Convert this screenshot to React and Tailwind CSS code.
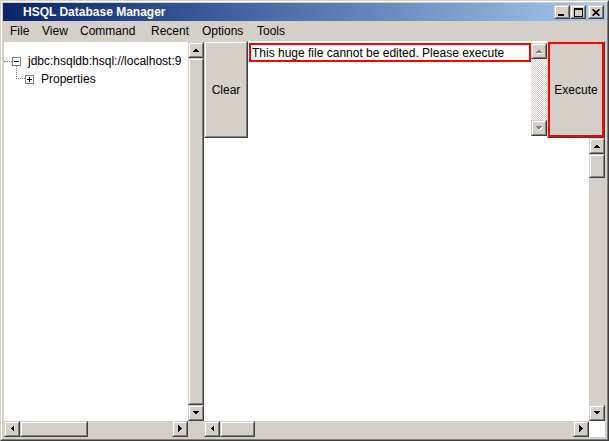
import React from 'react';

const outer = 'border border-t-[#d4d0c8] border-l-[#d4d0c8] border-r-[#404040] border-b-[#404040]';
const inner = 'border border-t-white border-l-white border-r-[#808080] border-b-[#808080]';

function Raised({ className = '', children, innerClassName = '' }) {
  return (
    <div className={`${outer} bg-[#d4d0c8] shrink-0 ${className}`}>
      <div className={`${inner} h-full w-full ${innerClassName}`}>{children}</div>
    </div>
  );
}

const arrowPoints = {
  up: '0,4 3.5,0.5 7,4',
  down: '0,0 3.5,3.5 7,0',
  left: '4,0 0.5,3.5 4,7',
  right: '0,0 3.5,3.5 0,7',
};

function Arrow({ dir, disabled }) {
  const vertical = dir === 'up' || dir === 'down';
  const w = vertical ? 7 : 4;
  const h = vertical ? 4 : 7;
  return (
    <svg width={w + 1} height={h + 1} viewBox={`0 0 ${w + 1} ${h + 1}`} shapeRendering="crispEdges">
      {disabled && <polygon points={arrowPoints[dir]} fill="#ffffff" transform="translate(1,1)" />}
      <polygon points={arrowPoints[dir]} fill={disabled ? '#808080' : '#000000'} />
    </svg>
  );
}

function ScrollButton({ dir, disabled }) {
  return (
    <Raised className="w-[16px] h-[16px]" innerClassName="flex items-center justify-center">
      <Arrow dir={dir} disabled={disabled} />
    </Raised>
  );
}

function HScroll({ thumb }) {
  return (
    <div className="flex-1 h-[16px] flex bg-[#d4d0c8]">
      <ScrollButton dir="left" />
      <Raised className="h-[16px]">
        <div style={{ width: thumb - 4 }} />
      </Raised>
      <div className="flex-1" />
      <ScrollButton dir="right" />
    </div>
  );
}

function TreeBox({ open }) {
  return (
    <svg width="9" height="9" viewBox="0 0 9 9" shapeRendering="crispEdges" className="shrink-0">
      <rect x="0.5" y="0.5" width="8" height="8" fill="#ffffff" stroke="#808080" />
      <line x1="2" y1="4.5" x2="7" y2="4.5" stroke="#000000" />
      {!open && <line x1="4.5" y1="2" x2="4.5" y2="7" stroke="#000000" />}
    </svg>
  );
}

function TitleButton({ kind, className = '' }) {
  return (
    <Raised className={`w-[16px] h-[14px] ${className}`} innerClassName="flex items-center justify-center">
      {kind === 'min' && (
        <svg width="8" height="7" viewBox="0 0 8 7" shapeRendering="crispEdges" className="mt-[1px]">
          <rect x="0" y="5" width="6" height="2" fill="#000" />
        </svg>
      )}
      {kind === 'max' && (
        <svg width="9" height="9" viewBox="0 0 9 9" shapeRendering="crispEdges">
          <rect x="0.5" y="0.5" width="8" height="8" fill="none" stroke="#000" />
          <rect x="0" y="0" width="9" height="2" fill="#000" />
        </svg>
      )}
      {kind === 'close' && (
        <svg width="8" height="7" viewBox="0 0 8 7">
          <path d="M0.6 0.3 L7.4 6.7 M7.4 0.3 L0.6 6.7" stroke="#000" strokeWidth="1.7" />
        </svg>
      )}
    </Raised>
  );
}

function RightVScroll() {
  return (
    <div className="w-[16px] shrink-0 flex flex-col bg-[#d4d0c8]">
      <ScrollButton dir="up" />
      <Raised className="w-[16px] h-[24px]" />
      <div className="flex-1" />
      <ScrollButton dir="down" />
    </div>
  );
}

function LeftVScroll() {
  return (
    <div className="w-[16px] shrink-0 flex flex-col bg-[#d4d0c8]">
      <ScrollButton dir="up" />
      <Raised className="w-[16px] flex-1" />
      <ScrollButton dir="down" />
    </div>
  );
}

function TextScroll() {
  return (
    <div className="w-[16px] shrink-0 flex flex-col bg-white pt-[2px] pb-[2px]">
      <div className="flex-1 flex flex-col bg-[repeating-conic-gradient(#d4d0c8_0%_25%,#ffffff_0%_50%)] bg-[length:2px_2px]">
        <ScrollButton dir="up" disabled />
        <div className="flex-1" />
        <ScrollButton dir="down" disabled />
      </div>
    </div>
  );
}

const menus = [
  ['File', 'w-[32px]'],
  ['View', 'w-[38px]'],
  ['Command', 'w-[71px]'],
  ['Recent', 'w-[51px]'],
  ['Options', 'w-[55px]'],
  ['Tools', 'w-[40px]'],
];

export default function App() {
  return (
    <div className="w-[609px] h-[441px] font-['Liberation_Sans',Arial,sans-serif] text-[12px] text-black">
      <div className={`h-full w-full ${outer}`}>
        <div className={`h-full w-full ${inner} bg-[#d4d0c8] p-px flex flex-col`}>
          {/* title bar */}
          <div className="h-[18px] shrink-0 flex items-center bg-linear-to-r from-[#0a246a] to-[#a6caf0] pl-[20px] pr-[2px]">
            <span className="flex-1 text-white font-bold leading-none">HSQL Database Manager</span>
            <TitleButton kind="min" />
            <TitleButton kind="max" />
            <TitleButton kind="close" className="ml-[2px]" />
          </div>

          {/* menu bar */}
          <div className="h-[20px] shrink-0 flex items-center pl-[7px]">
            {menus.map(([label, w]) => (
              <span key={label} className={`${w} leading-none`}>{label}</span>
            ))}
          </div>

          {/* content */}
          <div className="flex-1 flex px-px pb-px min-h-0">
            {/* left pane: connection tree */}
            <div className="w-[200px] shrink-0 flex flex-col pt-px">
              <div className="flex-1 flex min-h-0">
                <div className="flex-1 bg-white overflow-hidden whitespace-nowrap pt-[10px]">
                  <div className="h-[18px] flex items-center">
                    <span className="w-[8px] shrink-0 border-t border-dotted border-[#808080]" />
                    <TreeBox open />
                    <span className="ml-[7px] shrink-0 leading-none">jdbc:hsqldb:hsql://localhost:9</span>
                  </div>
                  <div className="h-[18px] flex items-center">
                    <span className="w-[12px] shrink-0" />
                    <span className="w-[9px] h-[14px] shrink-0 self-start -mt-[5px] border-l border-b border-dotted border-[#808080]" />
                    <TreeBox />
                    <span className="ml-[7px] shrink-0 leading-none">Properties</span>
                  </div>
                </div>
                <LeftVScroll />
              </div>
              <div className="h-[16px] shrink-0 flex">
                <HScroll thumb={68} />
                <div className="w-[16px] bg-[#d4d0c8]" />
              </div>
            </div>

            {/* right pane: command area and results */}
            <div className="flex-1 flex flex-col min-w-0">
              <div className="h-[97px] shrink-0 flex">
                <Raised className="w-[44px] h-full" innerClassName="flex items-center justify-center">
                  <span className="leading-none">Clear</span>
                </Raised>
                <div className="w-[299px] shrink-0 flex bg-white">
                  <div className="flex-1 pt-[2px] pl-px">
                    <div className="w-[282px] h-[19px] border-2 border-[#ff0000] pl-px flex items-center whitespace-nowrap overflow-hidden">
                      This huge file cannot be edited. Please execute
                    </div>
                  </div>
                  <TextScroll />
                </div>
                <div className={`flex-1 ${outer} bg-[#d4d0c8]`}>
                  <div className="h-full w-full border-2 border-[#ff0000] flex items-center justify-center">
                    <span className="leading-none">Execute</span>
                  </div>
                </div>
              </div>
              <div className="flex-1 flex min-h-0">
                <div className="flex-1 bg-white" />
                <RightVScroll />
              </div>
              <div className="h-[16px] shrink-0 flex">
                <HScroll thumb={35} />
                <div className="w-[16px] bg-white" />
              </div>
            </div>
          </div>
        </div>
      </div>
    </div>
  );
}
